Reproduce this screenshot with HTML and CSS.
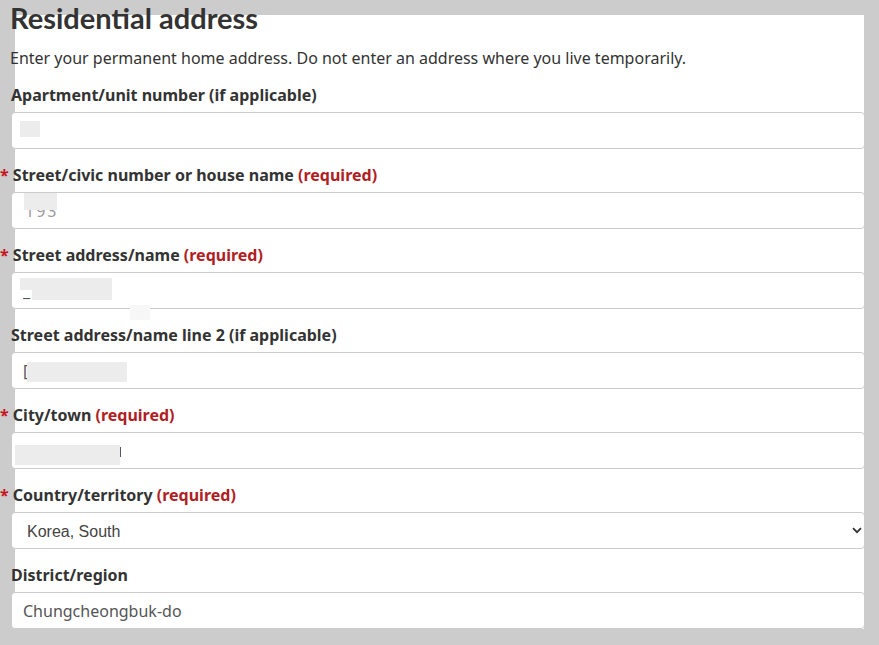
FILE: index.html
```html
<!DOCTYPE html>
<html lang="en">
<head>
<meta charset="utf-8">
<title>Residential address</title>
<link rel="stylesheet" href="styles.css">
</head>
<body>
<div class="panel">
  <div class="content">
    <h2 class="title">Residential address</h2>
    <p class="intro">Enter your permanent home address. Do not enter an address where you live temporarily.</p>

    <div class="field">
      <label class="label" for="apt">Apartment/unit number (if applicable)</label>
      <div class="control">
        <input class="input" id="apt" type="text" value="">
        <span class="redact r-apt"></span>
      </div>
    </div>

    <div class="field">
      <label class="label" for="civic"><span class="star">*</span> Street/civic number or house name <strong class="required">(required)</strong></label>
      <div class="control">
        <input class="input faded civic" id="civic" type="text" value="193">
        <span class="redact r-civic"></span>
      </div>
    </div>

    <div class="field">
      <label class="label" for="street"><span class="star">*</span> Street address/name <strong class="required">(required)</strong></label>
      <div class="control">
        <input class="input" id="street" type="text" value="_">
        <span class="redact r-street-a"></span>
        <span class="redact r-street"></span>
        <span class="redact faint r-street2"></span>
      </div>
    </div>

    <div class="field">
      <label class="label" for="street2">Street address/name line 2 (if applicable)</label>
      <div class="control">
        <input class="input" id="street2" type="text" value="[">
        <span class="redact r-line2"></span>
      </div>
    </div>

    <div class="field">
      <label class="label" for="city"><span class="star">*</span> City/town <strong class="required">(required)</strong></label>
      <div class="control">
        <input class="input city" id="city" type="text" value="">
        <span class="redact r-city"></span>
        <span class="caret-bar"></span>
      </div>
    </div>

    <div class="field">
      <label class="label" for="country"><span class="star">*</span> Country/territory <strong class="required">(required)</strong></label>
      <div class="control">
        <select class="input select" id="country">
          <option>Korea, South</option>
        </select>
        <svg class="chev" width="10" height="7" viewBox="0 0 10 7" aria-hidden="true"><path d="M1 1.2 L5 5.2 L9 1.2" fill="none" stroke="#333" stroke-width="1.8"/></svg>
      </div>
    </div>

    <div class="field">
      <label class="label" for="region">District/region</label>
      <div class="control">
        <input class="input" id="region" type="text" value="Chungcheongbuk-do">
      </div>
    </div>
  </div>
</div>
</body>
</html>
```

FILE: styles.css
```css
html, body {
  margin: 0;
  padding: 0;
}
body {
  background: #cccccc;
  font-family: "Noto Sans", "Liberation Sans", sans-serif;
  color: #333333;
  width: 879px;
  height: 645px;
  overflow: hidden;
  display: flow-root;
}
.panel {
  display: flow-root;
  margin: 15px 15px 0 15px;
  width: 849px;
  height: 614px;
  background: #ffffff;
}
.content {
  margin: -15px -1px 0 -4px;
}
.title {
  font-family: Lato, "Noto Sans", sans-serif;
  font-weight: 700;
  font-size: 29px;
  line-height: 36px;
  margin: 0 0 0 -1px;
  color: #333333;
}
.intro {
  font-size: 16px;
  line-height: 22px;
  margin: 11px 0 16px -1px;
  color: #333333;
}
.field {
  margin-bottom: 16px;
}
.label {
  display: block;
  font-weight: 700;
  font-size: 16px;
  line-height: 20px;
  margin-bottom: 7px;
  color: #333333;
}
.star {
  color: #c8141b;
  margin-left: -11px;
}
.required {
  color: #b01e23;
  font-weight: 700;
}
.control {
  position: relative;
  height: 37px;
}
.input {
  box-sizing: border-box;
  display: block;
  width: 100%;
  height: 37px;
  margin: 0;
  padding: 0 11px;
  border: 1px solid #cccccc;
  border-radius: 4px;
  background: #ffffff;
  font-family: "Noto Sans", sans-serif;
  font-size: 16px;
  color: #555555;
  outline: none;
}
.faded {
  color: #9a9a9a;
}
.civic {
  padding-left: 13px;
  letter-spacing: 2px;
}
.select {
  appearance: none;
  -webkit-appearance: none;
  font-family: "Liberation Sans", Arial, sans-serif;
  font-size: 16px;
  padding: 2px 15px 0 15px;
  color: #444444;
}
.chev {
  position: absolute;
  right: 3px;
  top: 15px;
}
.redact {
  position: absolute;
  background: #ececec;
}
.faint {
  background: #f7f7f7;
}
.r-apt { left: 9px; top: 9px; width: 20px; height: 16px; }
.r-civic { left: 13px; top: 1px; width: 33px; height: 17px; }
.r-street-a { left: 9px; top: 6px; width: 12px; height: 12px; }
.r-street { left: 21px; top: 6px; width: 80px; height: 22px; }
.r-street2 { left: 119px; top: 33px; width: 20px; height: 15px; }
.r-line2 { left: 16px; top: 10px; width: 100px; height: 20px; }
.r-city { left: 4px; top: 13px; width: 105px; height: 20px; }
.caret-bar {
  position: absolute;
  left: 109px;
  top: 15px;
  width: 1px;
  height: 10px;
  background: #556;
}
```
